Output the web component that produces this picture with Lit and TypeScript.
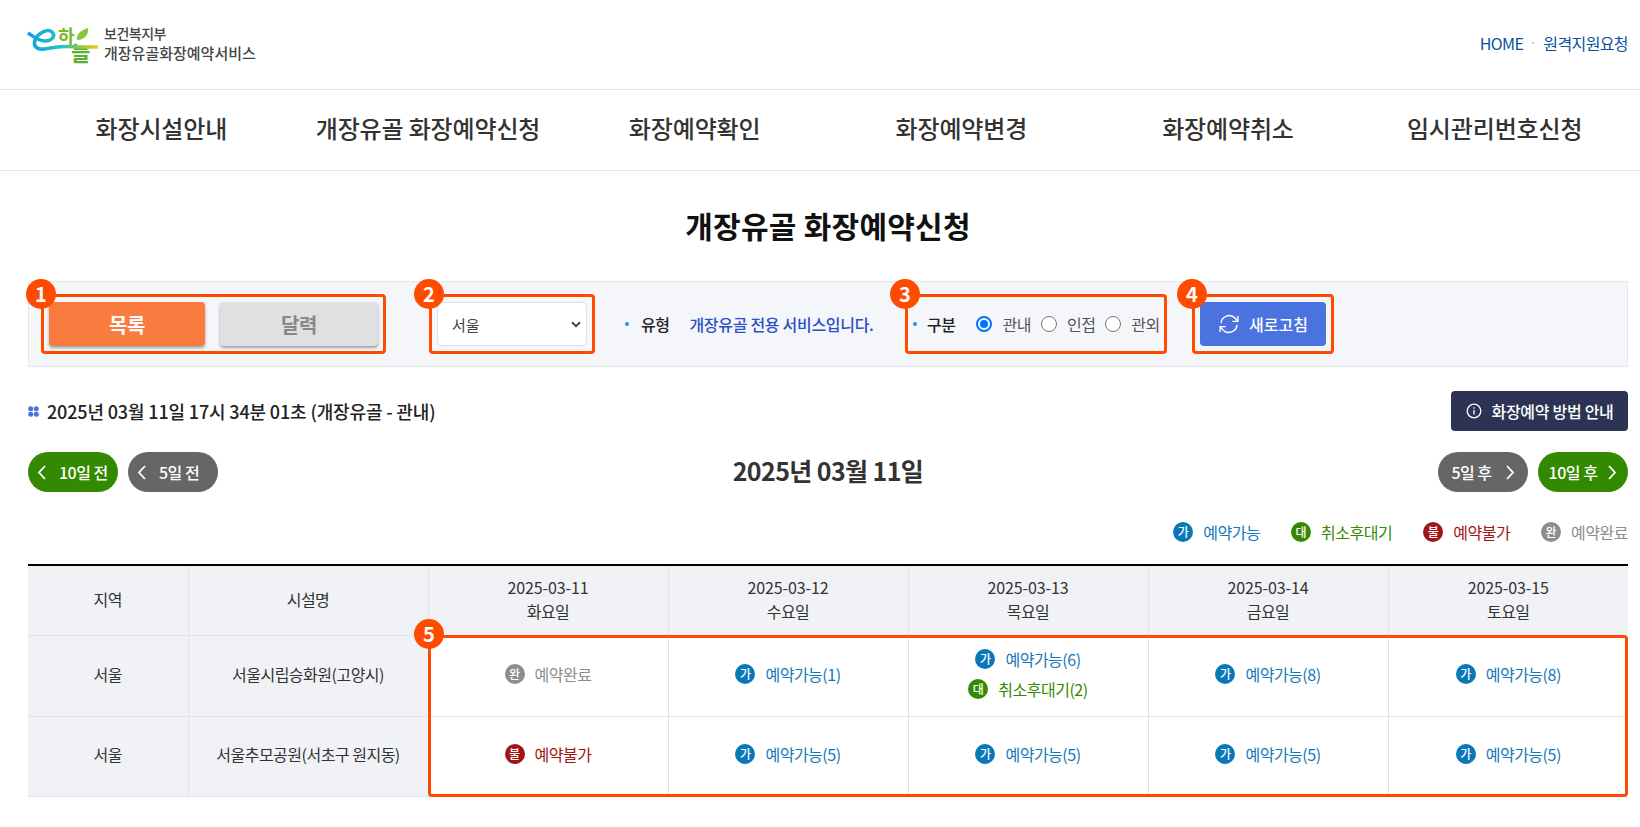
import { LitElement, html, css, svg } from "lit";
import { customElement } from "lit/decorators.js";

type Kind = "a" | "w" | "n" | "d";
const KINDS: Record<Kind, { g: string; t: string }> = {
  a: { g: "가", t: "예약가능" },
  w: { g: "대", t: "취소후대기" },
  n: { g: "불", t: "예약불가" },
  d: { g: "완", t: "예약완료" },
};

const NAV = ["화장시설안내", "개장유골 화장예약신청", "화장예약확인", "화장예약변경", "화장예약취소", "임시관리번호신청"];
const DAYS = [
  ["2025-03-11", "화요일"],
  ["2025-03-12", "수요일"],
  ["2025-03-13", "목요일"],
  ["2025-03-14", "금요일"],
  ["2025-03-15", "토요일"],
];
type Slot = [Kind, string];
const ROWS: { r: string; n: string; c: Slot[][] }[] = [
  {
    r: "서울",
    n: "서울시립승화원(고양시)",
    c: [[["d", ""]], [["a", "(1)"]], [["a", "(6)"], ["w", "(2)"]], [["a", "(8)"]], [["a", "(8)"]]],
  },
  {
    r: "서울",
    n: "서울추모공원(서초구 원지동)",
    c: [[["n", ""]], [["a", "(5)"]], [["a", "(5)"]], [["a", "(5)"]], [["a", "(5)"]]],
  },
];

const chevL = svg`<path d="M8 1 2 7.5 8 14" fill="none" stroke="#fff" stroke-width="1.8"/>`;
const chevR = svg`<path d="M2 1 8 7.5 2 14" fill="none" stroke="#fff" stroke-width="1.8"/>`;

@customElement("app-root")
export class AppRoot extends LitElement {
  static styles = css`
    :host {
      display: block;
      width: 1640px;
      height: 827px;
      overflow: hidden;
      background: #fff;
      font-family: "Noto Sans CJK KR", "Noto Sans", sans-serif;
      color: #222;
      font-size: 16px;
      letter-spacing: -0.5px;
    }
    .top {
      height: 89px;
      border-bottom: 1px solid #e4e4e4;
      display: flex;
      align-items: center;
      justify-content: space-between;
      padding: 0 12px 0 28px;
    }
    .brand { display: flex; align-items: center; gap: 6px; }
    .brand svg { display: block; overflow: visible; }
    .brand-text { display: flex; flex-direction: column; font-size: 14px; line-height: 19px; color: #444; font-weight: 500; padding-bottom: 4px; }
    .brand-text b { font-size: 15px; font-weight: 500; line-height: 19px; letter-spacing: 0; }
    .links { display: flex; align-items: center; gap: 9px; color: #0a4fa0; font-size: 16px; letter-spacing: -0.6px; padding-bottom: 4px; }
    .links i { width: 2px; height: 2px; background: #ccc; }
    nav {
      display: grid;
      grid-template-columns: repeat(6, 1fr);
      height: 74px;
      padding: 0 12px 6px 28px;
      border-bottom: 1px solid #e4e4e4;
      align-items: center;
      text-align: center;
      font-size: 24px;
      font-weight: 500;
      color: #333;
      letter-spacing: -0.15px;
    }
    main { padding: 0 12px 0 28px; }
    h1 {
      margin: 0;
      height: 108px;
      padding-bottom: 2px;
      display: flex;
      align-items: center;
      justify-content: center;
      font-size: 30px;
      font-weight: 700;
      color: #111;
      letter-spacing: 0.25px;
    }
    .filter {
      height: 84px;
      border: 1px solid #e2e5ec;
      background: #f5f6fa;
      display: flex;
      align-items: center;
      padding-left: 20px;
      white-space: nowrap;
    }
    .group { position: relative; display: flex; align-items: center; flex: none; }
    .hl {
      position: absolute;
      inset: -8px;
      border: 3px solid #ff4b00;
      border-radius: 4px;
      pointer-events: none;
    }
    .num {
      position: absolute;
      left: -23px;
      top: -23px;
      width: 30px;
      height: 30px;
      border-radius: 50%;
      background: #ff4b00;
      color: #fff;
      font-size: 20px;
      font-weight: 700;
      line-height: 30px;
      text-align: center;
      letter-spacing: 0;
    }
    .g1 { gap: 15px; }
    .tab {
      width: 158px;
      height: 44px;
      border-radius: 4px;
      display: flex;
      align-items: center;
      justify-content: center;
      font-size: 20px;
      font-weight: 700;
      box-shadow: 0 2px 3px rgba(0, 0, 0, 0.35);
    }
    .tab.on { background: #f97b3f; color: #fff; width: 156px; }
    .tab.off { background: #e0e0e2; color: #888; }
    .g2 { margin-left: 59px; }
    .sel {
      width: 150px;
      height: 44px;
      box-sizing: border-box;
      border: 1px solid #dfe1e6;
      border-radius: 4px;
      background: #fff;
      display: flex;
      align-items: center;
      justify-content: space-between;
      padding: 0 5px 0 14px;
      color: #444;
      font-size: 15px;
      letter-spacing: 0;
    }
    .info { display: flex; align-items: center; margin-left: 38px; width: 288px; flex: none; font-weight: 500; color: #222; }
    .dot { width: 4px; height: 4px; border-radius: 50%; background: #1a9ad6; margin-right: 12px; flex: none; }
    .info .desc { margin-left: 20px; color: #2a4fc8; font-weight: 500; letter-spacing: -0.3px; }
    .g3 { height: 44px; width: 246px; font-weight: 500; }
    .radio {
      width: 16px;
      height: 16px;
      box-sizing: border-box;
      border-radius: 50%;
      border: 1px solid #767676;
      background: #fff;
      flex: none;
    }
    .radio.on { border: 2px solid #0075ff; display: flex; align-items: center; justify-content: center; margin-left: 21px; }
    .radio.on::after { content: ""; width: 8px; height: 8px; border-radius: 50%; background: #0075ff; }
    .rl { color: #555; font-weight: 400; margin: 0 10px; flex: none; }
    .rl.last { margin-right: 0; }
    .lead { margin-left: 0; margin-right: 10px; }
    .g4 { margin-left: 41px; }
    .refresh {
      width: 126px;
      height: 44px;
      border-radius: 4px;
      background: #4a73e0;
      color: #fff;
      display: flex;
      align-items: center;
      justify-content: center;
      gap: 9px;
      font-weight: 500;
      letter-spacing: 0;
    }
    .status { height: 40px; margin-top: 24px; display: flex; align-items: center; justify-content: space-between; }
    .stamp { display: flex; align-items: center; gap: 8px; font-size: 18px; font-weight: 500; letter-spacing: -0.15px; color: #222; }
    .guide {
      height: 40px;
      width: 177px;
      border-radius: 4px;
      background: #2d3353;
      color: #fff;
      display: flex;
      align-items: center;
      justify-content: center;
      gap: 10px;
      font-weight: 500;
      letter-spacing: -0.3px;
    }
    .daynav { height: 40px; margin-top: 21px; display: flex; align-items: center; justify-content: space-between; }
    .pills { display: flex; gap: 10px; }
    .pill {
      width: 90px;
      height: 40px;
      border-radius: 20px;
      color: #fff;
      display: flex;
      align-items: center;
      justify-content: center;
      gap: 10px;
      font-weight: 500;
      box-sizing: border-box;
    }
    .pill.green { background: #338a00; }
    .pill.grey { background: #666; gap: 13px; }
    .pills.left .pill { justify-content: flex-start; padding-left: 9px; gap: 12px; }
    .curdate { font-size: 25px; font-weight: 700; color: #333; letter-spacing: -0.6px; padding-bottom: 4px; }
    .legend { display: flex; justify-content: flex-end; gap: 31px; height: 24px; margin-top: 28px; align-items: center; }
    .slot { display: inline-flex; align-items: center; gap: 10px; }
    .ic {
      width: 20px;
      height: 20px;
      border-radius: 50%;
      color: #fff;
      font-size: 12px;
      font-weight: 500;
      line-height: 20px;
      text-align: center;
      letter-spacing: 0;
      flex: none;
    }
    .a { color: #1678b8; } .a .ic { background: #0a78b8; color: #fff; }
    .w { color: #338a00; } .w .ic { background: #338a00; color: #fff; }
    .n { color: #a01515; } .n .ic { background: #a01515; color: #fff; }
    .d { color: #8d8d8d; } .d .ic { background: #8d8d8d; color: #fff; }
    .tablewrap { position: relative; margin-top: 20px; }
    table {
      width: 1600px;
      table-layout: fixed;
      border-collapse: collapse;
      border-top: 2px solid #000;
    }
    th, td {
      border-bottom: 1px solid #e2e4ea;
      border-left: 1px solid #e2e4ea;
      text-align: center;
      font-weight: 400;
      padding: 0 0 4px;
      box-sizing: border-box;
      color: #333;
    }
    tr > :first-child { border-left: 0; }
    th { background: #f1f2f6; }
    thead th { height: 70px; line-height: 24px; padding-bottom: 2px; }
    .date { letter-spacing: -0.1px; }
    tbody tr:first-child > * { height: 81px; }
    tbody tr:last-child > * { height: 80px; }
    .slots { display: flex; flex-direction: column; align-items: center; gap: 6px; }
    .box5 { position: absolute; inset: 71px 0 0 400px; }
    .box5 .hl { inset: 0; }
    .box5 .num { left: -14px; top: -16px; }
  `;

  private ic(k: Kind, suffix = "") {
    return html`<span class="slot ${k}"><span class="ic">${KINDS[k].g}</span><span>${KINDS[k].t}${suffix}</span></span>`;
  }

  private mark(n: number) {
    return html`<span class="hl"></span><span class="num">${n}</span>`;
  }

  render() {
    return html`
      <div class="top">
        <div class="brand">
          <svg width="70" height="34" viewBox="0 0 70 34">
            <defs>
              <linearGradient id="sw" x1="0" x2="70" y1="0" y2="0" gradientUnits="userSpaceOnUse">
                <stop offset="0" stop-color="#0f9fe0" />
                <stop offset="0.5" stop-color="#2cc4c4" />
                <stop offset="0.75" stop-color="#8fce3c" />
                <stop offset="1" stop-color="#f8c21a" />
              </linearGradient>
            </defs>
            <text x="30" y="15" font-size="18" font-weight="700" fill="#78b82a" letter-spacing="0">하</text>
            <text x="43" y="33" font-size="21" font-weight="700" fill="#58b030" letter-spacing="0">늘</text>
            <path d="M0 5 C5 8 10 13 17 13 C24 13 28 8 24 4 C20 0 10 5 7 12 C5 18 9 22 16 21 C25 20 30 18 40 18.5 C50 19 60 19 70 19"
              fill="none" stroke="url(#sw)" stroke-width="3.6" />
            <path d="M49 12 C48 6 53 2 60 0 C61 6 57 12 49 12Z" fill="#8cc63f" />
          </svg>
          <div class="brand-text"><span>보건복지부</span><b>개장유골화장예약서비스</b></div>
        </div>
        <div class="links"><span>HOME</span><i></i><span>원격지원요청</span></div>
      </div>
      <nav>${NAV.map((n) => html`<span>${n}</span>`)}</nav>
      <main>
        <h1>개장유골 화장예약신청</h1>
        <div class="filter">
          <div class="group g1">
            <div class="tab on">목록</div>
            <div class="tab off">달력</div>
            ${this.mark(1)}
          </div>
          <div class="group g2">
            <div class="sel">
              <span>서울</span>
              <svg width="10" height="7" viewBox="0 0 10 7"><path d="M1 1.2 5 5.2 9 1.2" fill="none" stroke="#444" stroke-width="2" /></svg>
            </div>
            ${this.mark(2)}
          </div>
          <div class="info"><span class="dot"></span><span>유형</span><span class="desc">개장유골 전용 서비스입니다.</span></div>
          <div class="group g3">
            <span class="dot lead"></span><span>구분</span>
            <span class="radio on"></span><span class="rl">관내</span>
            <span class="radio"></span><span class="rl">인접</span>
            <span class="radio"></span><span class="rl last">관외</span>
            ${this.mark(3)}
          </div>
          <div class="group g4">
            <div class="refresh">
              <svg width="22" height="22" viewBox="0 0 24 24" fill="none" stroke="#fff" stroke-width="1.5">
                <path d="M3.2 11a9 9 0 0 1 15.6-5.2L21.5 9" />
                <path d="M21.7 3.2V9.2h-6" />
                <path d="M20.8 13a9 9 0 0 1-15.6 5.2L2.5 15" />
                <path d="M2.3 20.8v-6h6" />
              </svg>
              <span>새로고침</span>
            </div>
            ${this.mark(4)}
          </div>
        </div>
        <div class="status">
          <div class="stamp">
            <svg width="11" height="11" viewBox="0 0 11 11" fill="#4a73e0">
              <circle cx="2.7" cy="2.7" r="2.5" /><circle cx="8.3" cy="2.7" r="2.5" /><circle cx="2.7" cy="8.3" r="2.5" /><circle cx="8.3" cy="8.3" r="2.5" />
            </svg>
            <span>2025년 03월 11일 17시 34분 01초 (개장유골 - 관내)</span>
          </div>
          <div class="guide">
            <svg width="16" height="16" viewBox="0 0 16 16" fill="none" stroke="#fff" stroke-width="1.3">
              <circle cx="8" cy="8" r="6.8" /><path d="M8 7v4.5M8 4.2v1.6" />
            </svg>
            <span>화장예약 방법 안내</span>
          </div>
        </div>
        <div class="daynav">
          <div class="pills left">
            <div class="pill green"><svg width="10" height="15" viewBox="0 0 10 15">${chevL}</svg><span>10일 전</span></div>
            <div class="pill grey"><svg width="10" height="15" viewBox="0 0 10 15">${chevL}</svg><span>5일 전</span></div>
          </div>
          <div class="curdate">2025년 03월 11일</div>
          <div class="pills">
            <div class="pill grey"><span>5일 후</span><svg width="10" height="15" viewBox="0 0 10 15">${chevR}</svg></div>
            <div class="pill green"><span>10일 후</span><svg width="10" height="15" viewBox="0 0 10 15">${chevR}</svg></div>
          </div>
        </div>
        <div class="legend">${(["a", "w", "n", "d"] as Kind[]).map((k) => this.ic(k))}</div>
        <div class="tablewrap">
          <table>
            <colgroup><col style="width:160px" /><col style="width:240px" />${DAYS.map(() => html`<col style="width:240px" />`)}</colgroup>
            <thead>
              <tr>
                <th>지역</th>
                <th>시설명</th>
                ${DAYS.map((d) => html`<th><span class="date">${d[0]}</span><br />${d[1]}</th>`)}
              </tr>
            </thead>
            <tbody>
              ${ROWS.map(
                (r) => html`<tr>
                  <th>${r.r}</th>
                  <th>${r.n}</th>
                  ${r.c.map(
                    (c) => html`<td><div class="slots">${c.map(([k, s]) => this.ic(k, s))}</div></td>`
                  )}
                </tr>`
              )}
            </tbody>
          </table>
          <div class="box5">${this.mark(5)}</div>
        </div>
      </main>
    `;
  }
}
